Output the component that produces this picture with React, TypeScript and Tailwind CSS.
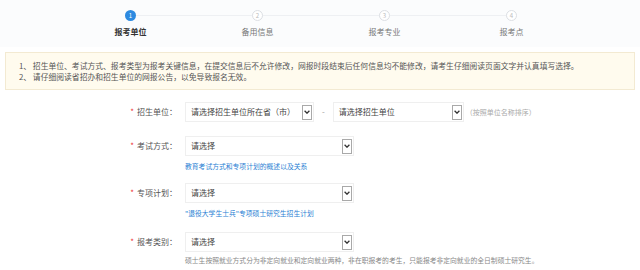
import React from "react";

const steps = [
  { n: "1", label: "报考单位", active: true },
  { n: "2", label: "备用信息", active: false },
  { n: "3", label: "报考专业", active: false },
  { n: "4", label: "报考点", active: false },
];

function Arrow() {
  return (
    <span className="flex h-[15px] w-[10px] items-center justify-center border border-[#a9a9a9] bg-white">
      <svg width="6" height="4" viewBox="0 0 6 4">
        <path d="M0.6 0.8 L3 3.2 L5.4 0.8" fill="none" stroke="#333" strokeWidth="1.3" />
      </svg>
    </span>
  );
}

function Select({ text, width }: { text: string; width: string }) {
  return (
    <div className={`flex h-[20px] items-center justify-between border border-[#efefef] bg-white pl-[5px] pr-[1px] ${width}`}>
      <span className="whitespace-nowrap text-[8px] text-[#444]">{text}</span>
      <Arrow />
    </div>
  );
}

function Label({ text }: { text: string }) {
  return (
    <div className="w-[178px] whitespace-nowrap pr-[1px] text-right text-[8px] text-[#555]">
      <span className="mr-[3px] text-[#e33]">*</span>
      {text}：
    </div>
  );
}

export default function App() {
  return (
    <div
      className="h-[270px] w-[640px] overflow-hidden bg-white"
      style={{ fontFamily: '"Noto Sans CJK SC", "Noto Sans", sans-serif' }}
    >
      {/* Steps */}
      <div className="h-[47px] bg-[#fbfcfd] pt-[10px]">
        <div className="relative ml-[67px] grid w-[508px] grid-cols-4">
          <div className="absolute left-[64px] right-[64px] top-[5px] h-px bg-[#eef0f3]" />
          {steps.map((s) => (
            <div key={s.n} className="relative flex flex-col items-center">
              <span
                className={
                  s.active
                    ? "flex h-[11px] w-[11px] items-center justify-center rounded-full bg-[#2d8ae0] text-[6px] leading-none text-white"
                    : "flex h-[11px] w-[11px] items-center justify-center rounded-full border border-[#dcdfe4] bg-white text-[6px] leading-none text-[#bbb]"
                }
              >
                {s.n}
              </span>
              <span
                className={
                  s.active
                    ? "mt-[6px] text-[8px] leading-[10px] font-bold text-[#333]"
                    : "mt-[6px] text-[8px] leading-[10px] text-[#777]"
                }
              >
                {s.label}
              </span>
            </div>
          ))}
        </div>
      </div>

      {/* Notice */}
      <div className="mx-[5px] mt-[5px] border border-[#f3ead2] bg-[#fffbee] px-[13px] py-[7px] text-[7.8px] leading-[11px] text-[#555]">
        <p className="whitespace-nowrap">1、&nbsp;招生单位、考试方式、报考类型为报考关键信息，在提交信息后不允许修改，网报时段结束后任何信息均不能修改，请考生仔细阅读页面文字并认真填写选择。</p>
        <p className="whitespace-nowrap">2、&nbsp;请仔细阅读省招办和招生单位的网报公告，以免导致报名无效。</p>
      </div>

      {/* Form */}
      <div className="mt-[12px] flex flex-col">
        <div className="flex items-center">
          <Label text="招生单位" />
          <div className="ml-[7px] flex items-center">
            <Select text="请选择招生单位所在省（市）" width="w-[129px]" />
            <span className="mx-[8px] text-[8px] text-[#999]">-</span>
            <Select text="请选择招生单位" width="w-[131px]" />
            <span className="ml-[2px] whitespace-nowrap text-[7px] text-[#aaa]">（按照单位名称排序）</span>
          </div>
        </div>

        <div className="mt-[14px] flex items-center">
          <Label text="考试方式" />
          <div className="ml-[7px]">
            <Select text="请选择" width="w-[169px]" />
          </div>
        </div>
        <p className="ml-[185px] mt-[5px] text-[6.8px] leading-[10px] text-[#2a7fd4]">教育考试方式和专项计划的概述以及关系</p>

        <div className="mt-[12px] flex items-center">
          <Label text="专项计划" />
          <div className="ml-[7px]">
            <Select text="请选择" width="w-[169px]" />
          </div>
        </div>
        <p className="ml-[185px] mt-[5px] text-[6.8px] leading-[10px] text-[#2a7fd4]">"退役大学生士兵"专项硕士研究生招生计划</p>

        <div className="mt-[14px] flex items-center">
          <Label text="报考类别" />
          <div className="ml-[7px]">
            <Select text="请选择" width="w-[169px]" />
          </div>
        </div>
        <p className="ml-[185px] mt-[3px] whitespace-nowrap text-[6.8px] leading-[10px] text-[#888]">
          硕士生按照就业方式分为非定向就业和定向就业两种，非在职报考的考生，只能报考非定向就业的全日制硕士研究生。
        </p>
      </div>
    </div>
  );
}
